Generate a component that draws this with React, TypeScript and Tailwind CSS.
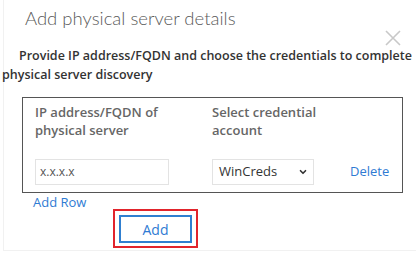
import { ChevronDown } from 'lucide-react';

export default function App() {
  return (
    <div className="w-[419px] h-[256px] bg-white overflow-hidden font-['Open_Sans',sans-serif]">
      <div className="ml-[3px] w-[413px] h-[251px] border-l border-b border-[#f1f1f1]">
        {/* Title */}
        <h1 className="pl-[21px] pt-[6px] h-[30px] font-['Lato',sans-serif] text-[18.5px] leading-[24px] font-light text-[#5a5a5a]">
          Add physical server details
        </h1>

        {/* Close */}
        <div className="flex justify-end pr-[15px] h-[16px]">
          <svg width="16" height="16" viewBox="0 0 16 16" className="text-[#c8c8c8]">
            <path d="M1 1L15 15M15 1L1 15" stroke="currentColor" strokeWidth="1.6" />
          </svg>
        </div>

        {/* Description */}
        <p className="-ml-[2px] text-[12.5px] leading-[19px] font-semibold text-[#333] whitespace-nowrap">
          <span className="pl-[17px]">Provide IP address/FQDN and choose the credentials to complete</span>
          <br />
          physical server discovery
        </p>

        {/* Table */}
        <div className="ml-[18px] mt-[13px] w-[381px] border border-[#555] pl-[12px] pt-[5px] pb-[7px]">
          <div className="flex text-[13px] leading-[18px] font-semibold text-[#666]">
            <div className="w-[177px]">
              IP address/FQDN of
              <br />
              physical server
            </div>
            <div>
              Select credential
              <br />
              account
            </div>
          </div>
          <div className="flex items-center mt-[20px]">
            <div className="w-[177px]">
              <div className="w-[134px] h-[26px] border border-[#e3e3e3] flex items-center pl-[4px] text-[12px] text-[#555]">
                x.x.x.x
              </div>
            </div>
            <div className="w-[102px] h-[26px] border border-[#e3e3e3] flex items-center justify-between pl-[6px] pr-[5px] text-[13px] text-[#333]">
              <span>WinCreds</span>
              <ChevronDown className="w-[10px] h-[10px] text-[#333]" strokeWidth={4} />
            </div>
            <span className="ml-[36px] text-[13px] text-[#2f7bd3]">Delete</span>
          </div>
        </div>

        {/* Add Row */}
        <div className="ml-[29px] text-[13px] leading-[14px] mt-[2px] text-[#2f7bd3]">Add Row</div>

        {/* Add button (highlighted) */}
        <div className="ml-[109px] w-[85px] h-[39px] border-2 border-[#e1242c] px-[4px] pt-[4px]">
          <button className="w-[73px] h-[28px] border-2 border-[#2f7fd0] bg-white text-[14px] text-[#2f7bd3] flex items-center justify-center">
            Add
          </button>
        </div>
      </div>
    </div>
  );
}
